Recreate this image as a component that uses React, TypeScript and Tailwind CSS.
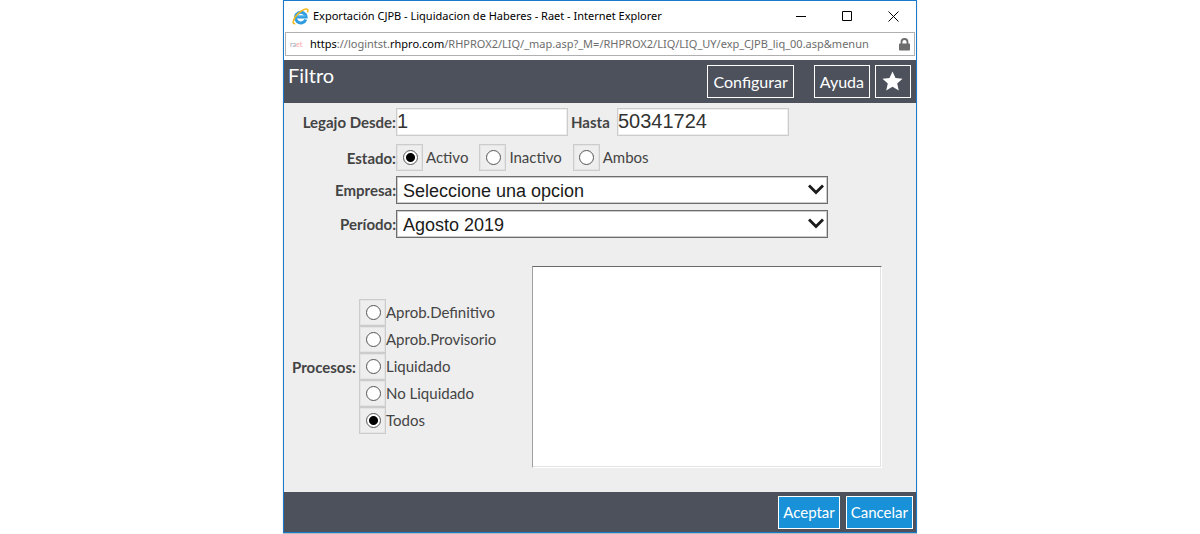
import { useState } from 'react';

const estados = ['Activo', 'Inactivo', 'Ambos'];
const procesos = ['Aprob.Definitivo', 'Aprob.Provisorio', 'Liquidado', 'No Liquidado', 'Todos'];

const labelClass = 'w-28 shrink-0 text-right font-bold leading-5';

const RadioBox = ({ name, label, checked, onChange, gap }: {
  name: string;
  label: string;
  checked: boolean;
  onChange: () => void;
  gap?: boolean;
}) => (
  <label className={`flex items-center ${gap ? 'gap-[3px]' : ''}`}>
    <span className="flex h-[27px] w-[27px] items-center justify-center border border-[#ccc] pl-px shadow-[inset_0_0_0_1px_#e4e4e4]">
      <input
        type="radio"
        name={name}
        checked={checked}
        onChange={onChange}
        className="h-[15px] w-[15px] appearance-none rounded-full border border-[#555] bg-white checked:bg-[radial-gradient(circle,#000_4px,#fff_5px)]"
      />
    </span>
    <span>{label}</span>
  </label>
);

const SelectRow = ({ id, label, option }: { id: string; label: string; option: string }) => (
  <div className="flex items-center">
    <label htmlFor={id} className={labelClass}>{label}</label>
    <div className="grid w-[432px] items-center">
      <select
        id={id}
        className="col-start-1 row-start-1 h-7 w-full appearance-none border border-[#6d6d6d] bg-white pt-px pl-1.5 font-['Liberation_Sans',sans-serif] text-lg leading-6 text-[#1a1a1a] shadow-[inset_0_0_0_1px_#ccc]"
      >
        <option>{option}</option>
      </select>
      <svg className="pointer-events-none col-start-1 row-start-1 mr-1 mb-0.5 justify-self-end" width="16" height="11" viewBox="0 0 16 11" fill="none" stroke="#1a1a1a" strokeWidth="2.8">
        <path d="M1 1.5 8 8.5 15 1.5" />
      </svg>
    </div>
  </div>
);

export default function App() {
  const [estado, setEstado] = useState('Activo');
  const [proceso, setProceso] = useState('Todos');
  const [desde, setDesde] = useState('1');
  const [hasta, setHasta] = useState('50341724');

  const inputClass =
    "h-7 w-[172px] border border-[#ccc] bg-white pb-0.5 font-['Liberation_Sans',sans-serif] text-xl leading-6 text-[#333] shadow-[inset_0_0_0_1px_#eee]";

  return (
    <div className="min-h-screen bg-white font-['Lato',sans-serif]">
      <div className="mx-auto w-full max-w-[634px] border border-[#1979ca] bg-white shadow-[0_1px_1px_#bbb]">
        {/* Title bar */}
        <div className="flex h-[31px] items-center pb-px pl-2">
          <svg width="17" height="17" viewBox="0 0 17 17" fill="none">
            <path d="M13.8 11.4A5.3 5.3 0 1 1 14.1 9H5.2" stroke="#2f9de0" strokeWidth="3" />
            <path d="M4.6 7.9h9" stroke="#67c3f2" strokeWidth="1" />
            <path d="M3.2 15.6C.4 16.2.6 13 3.4 8.8 6.8 4 12.6.4 15 1.2c1 .5 1 1.8.4 3.2" stroke="#f2b91e" strokeWidth="1.6" />
          </svg>
          <h1 className="ml-1 flex-1 font-['Noto_Sans',sans-serif] text-[11px] leading-4 text-black">
            Exportación CJPB - Liquidacion de Haberes - Raet - Internet Explorer
          </h1>
          <div className="flex">
            <button aria-label="Minimizar" className="flex h-7 w-[46px] items-center justify-center">
              <svg width="11" height="11" viewBox="0 0 11 11" stroke="#000"><path d="M0 5.5h10" /></svg>
            </button>
            <button aria-label="Maximizar" className="flex h-7 w-[46px] items-center justify-center">
              <svg width="11" height="11" viewBox="0 0 11 11" fill="none" stroke="#000"><path d="M.5.5h9v9h-9z" /></svg>
            </button>
            <button aria-label="Cerrar" className="flex h-7 w-[46px] items-center justify-center">
              <svg width="11" height="11" viewBox="0 0 11 11" stroke="#000"><path d="m.5.5 10 10M10.5.5l-10 10" /></svg>
            </button>
          </div>
        </div>

        {/* Address bar */}
        <div className="mx-px mb-1 flex h-6 items-center border border-[#b0b0b0] px-1">
          <span className="w-[14px] text-[7px] leading-3"><span className="text-gray-400">ra</span><span className="text-red-300">et</span></span>
          <p className="ml-1.5 min-w-0 flex-1 overflow-hidden font-['Noto_Sans',sans-serif] text-[11px] leading-4 whitespace-nowrap text-[#6d6d6d]">
            <span className="text-black">https</span>://logintst.<span className="text-black">rhpro.com</span>/RHPROX2/LIQ/_map.asp?_M=/RHPROX2/LIQ/LIQ_UY/exp_CJPB_liq_00.asp&menun
          </p>
          <svg className="ml-1" width="11" height="13" viewBox="0 0 11 13">
            <path d="M2.5 6V4a3 3 0 0 1 6 0v2" fill="none" stroke="#6d6d6d" strokeWidth="1.8" />
            <rect y="5.5" width="11" height="7" rx=".8" fill="#6d6d6d" />
          </svg>
        </div>

        {/* Header */}
        <header className="flex h-[43px] items-start bg-[#4d515c] px-1 text-white">
          <h2 className="flex-1 pt-[3px] text-xl leading-6">Filtro</h2>
          <div className="flex pt-[5px] pr-px text-base">
            <button className="h-[33px] border border-white px-[5px]">Configurar</button>
            <button className="ml-5 h-[33px] border border-white px-[5px]">Ayuda</button>
            <button aria-label="Favoritos" className="ml-[5px] flex h-[33px] w-9 items-center justify-center border border-white pr-0.5 pb-0.5">
              <svg width="21" height="20" viewBox="0 0 21 20" fill="#fff">
                <path d="M10.5.5 13.5 7l7 .7-5.3 4.7 1.6 7-6.3-3.7-6.3 3.7 1.6-7L.5 7.7l7-.7z" />
              </svg>
            </button>
          </div>
        </header>

        {/* Filters */}
        <main className="h-[389px] bg-[#eee] pt-[5px] text-[15px] text-[#444]">
          <div className="flex items-center">
            <label htmlFor="desde" className={labelClass}>Legajo Desde:</label>
            <input id="desde" value={desde} onChange={(e) => setDesde(e.target.value)} className={inputClass} />
            <label htmlFor="hasta" className="w-[49px] pl-[3px] leading-5 font-bold">Hasta</label>
            <input id="hasta" value={hasta} onChange={(e) => setHasta(e.target.value)} className={inputClass} />
          </div>

          <div className="mt-2 mb-[5px] flex items-center" role="radiogroup" aria-label="Estado">
            <span className={labelClass}>Estado:</span>
            <div className="flex gap-[11px]">
              {estados.map((e) => (
                <RadioBox key={e} name="estado" label={e} checked={estado === e} onChange={() => setEstado(e)} gap />
              ))}
            </div>
          </div>

          <div className="flex flex-col gap-1.5">
            <SelectRow id="empresa" label="Empresa:" option="Seleccione una opcion" />
            <SelectRow id="periodo" label="Período:" option="Agosto 2019" />
          </div>

          <div className="mt-7 flex items-center">
            <span className="w-[75px] pl-2 font-bold">Procesos:</span>
            <div className="w-[173px] pb-0.5" role="radiogroup" aria-label="Procesos">
              {procesos.map((p) => (
                <RadioBox key={p} name="proceso" label={p} checked={proceso === p} onChange={() => setProceso(p)} />
              ))}
            </div>
            <select
              multiple
              aria-label="Lista de procesos"
              className="h-[202px] w-[350px] border border-t-[#696969] border-r-white border-b-white border-l-[#a0a0a0] bg-white shadow-[inset_-1px_-1px_#e3e3e3]"
            />
          </div>
        </main>

        {/* Footer */}
        <footer className="flex h-10 items-center justify-end gap-1.5 bg-[#4d515c] px-[3px] text-[15px] text-white">
          <button className="h-[33px] border border-white bg-[#1991d8] px-1">Aceptar</button>
          <button className="h-[33px] border border-white bg-[#1991d8] px-1">Cancelar</button>
        </footer>
      </div>
    </div>
  );
}
